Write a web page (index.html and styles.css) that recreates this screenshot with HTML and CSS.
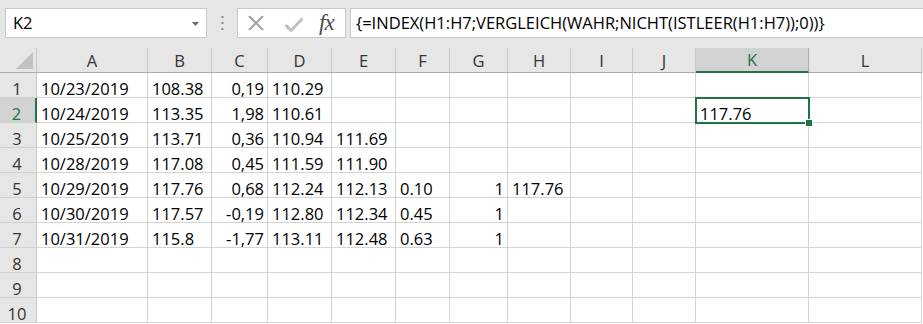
FILE: index.html
```html
<!DOCTYPE html>
<html>
<head>
<meta charset="utf-8">
<link rel="stylesheet" href="styles.css">
</head>
<body>
<div class="app">
  <div class="toolbar">
    <div class="namebox">
      <span class="name">K2</span>
      <svg class="dd" width="7" height="4" viewBox="0 0 7 4"><polygon points="0,0 7,0 3.5,4" fill="#6a6a6a"/></svg>
    </div>
    <div class="grip">
      <svg width="3" height="14" viewBox="0 0 3 14"><rect x="0.5" y="0" width="2" height="2" fill="#8a8a8a"/><rect x="0.5" y="6" width="2" height="2" fill="#8a8a8a"/><rect x="0.5" y="12" width="2" height="2" fill="#8a8a8a"/></svg>
    </div>
    <div class="fbtns">
      <svg class="ico" width="18" height="16" viewBox="0 0 18 16"><path d="M2 1 L16 15 M16 1 L2 15" stroke="#a3a3a3" stroke-width="2" fill="none"/></svg>
      <svg class="ico" width="20" height="15" viewBox="0 0 20 15"><path d="M1.5 8 L7 13.5 L18.5 1.5" stroke="#c0c0c0" stroke-width="3" fill="none"/></svg>
      <span class="fx">fx</span>
    </div>
    <div class="formula">{=INDEX(H1:H7;VERGLEICH(WAHR;NICHT(ISTLEER(H1:H7));0))}</div>
  </div>
  <div class="sheet">
    <div class="row head">
      <div class="corner"><svg width="17" height="17" viewBox="0 0 17 17"><polygon points="17,0 17,17 0,17" fill="#c2c2c2"/></svg></div>
      <div class="ch">A</div><div class="ch">B</div><div class="ch">C</div><div class="ch">D</div><div class="ch">E</div><div class="ch">F</div><div class="ch">G</div><div class="ch">H</div><div class="ch">I</div><div class="ch">J</div><div class="ch sel">K</div><div class="ch">L</div>
    </div>
    <div class="row">
      <div class="rh">1</div>
      <div class="c">10/23/2019</div><div class="c">108.38</div><div class="c r">0,19</div><div class="c">110.29</div><div class="c"></div><div class="c"></div><div class="c"></div><div class="c"></div><div class="c"></div><div class="c"></div><div class="c"></div><div class="c"></div>
    </div>
    <div class="row">
      <div class="rh sel">2</div>
      <div class="c">10/24/2019</div><div class="c">113.35</div><div class="c r">1,98</div><div class="c">110.61</div><div class="c"></div><div class="c"></div><div class="c"></div><div class="c"></div><div class="c"></div><div class="c"></div><div class="c active">117.76<span class="handle"></span></div><div class="c"></div>
    </div>
    <div class="row">
      <div class="rh">3</div>
      <div class="c">10/25/2019</div><div class="c">113.71</div><div class="c r">0,36</div><div class="c">110.94</div><div class="c">111.69</div><div class="c"></div><div class="c"></div><div class="c"></div><div class="c"></div><div class="c"></div><div class="c"></div><div class="c"></div>
    </div>
    <div class="row">
      <div class="rh">4</div>
      <div class="c">10/28/2019</div><div class="c">117.08</div><div class="c r">0,45</div><div class="c">111.59</div><div class="c">111.90</div><div class="c"></div><div class="c"></div><div class="c"></div><div class="c"></div><div class="c"></div><div class="c"></div><div class="c"></div>
    </div>
    <div class="row">
      <div class="rh">5</div>
      <div class="c">10/29/2019</div><div class="c">117.76</div><div class="c r">0,68</div><div class="c">112.24</div><div class="c">112.13</div><div class="c">0.10</div><div class="c r">1</div><div class="c">117.76</div><div class="c"></div><div class="c"></div><div class="c"></div><div class="c"></div>
    </div>
    <div class="row">
      <div class="rh">6</div>
      <div class="c">10/30/2019</div><div class="c">117.57</div><div class="c r">-0,19</div><div class="c">112.80</div><div class="c">112.34</div><div class="c">0.45</div><div class="c r">1</div><div class="c"></div><div class="c"></div><div class="c"></div><div class="c"></div><div class="c"></div>
    </div>
    <div class="row">
      <div class="rh">7</div>
      <div class="c">10/31/2019</div><div class="c">115.8</div><div class="c r">-1,77</div><div class="c">113.11</div><div class="c">112.48</div><div class="c">0.63</div><div class="c r">1</div><div class="c"></div><div class="c"></div><div class="c"></div><div class="c"></div><div class="c"></div>
    </div>
    <div class="row">
      <div class="rh">8</div>
      <div class="c"></div><div class="c"></div><div class="c"></div><div class="c"></div><div class="c"></div><div class="c"></div><div class="c"></div><div class="c"></div><div class="c"></div><div class="c"></div><div class="c"></div><div class="c"></div>
    </div>
    <div class="row">
      <div class="rh">9</div>
      <div class="c"></div><div class="c"></div><div class="c"></div><div class="c"></div><div class="c"></div><div class="c"></div><div class="c"></div><div class="c"></div><div class="c"></div><div class="c"></div><div class="c"></div><div class="c"></div>
    </div>
    <div class="row">
      <div class="rh">10</div>
      <div class="c"></div><div class="c"></div><div class="c"></div><div class="c"></div><div class="c"></div><div class="c"></div><div class="c"></div><div class="c"></div><div class="c"></div><div class="c"></div><div class="c"></div><div class="c"></div>
    </div>
  </div>
</div>
</body>
</html>
```

FILE: styles.css
```css
* { box-sizing: border-box; }
html, body { margin: 0; padding: 0; background: #ffffff; }
body {
  width: 923px;
  height: 324px;
  overflow: hidden;
  font-family: "Open Sans", "Noto Sans", sans-serif;
  font-size: 16.5px;
  color: #000;
}
.app { display: flex; flex-direction: column; }

.toolbar {
  height: 48px;
  background: #e6e6e6;
  display: flex;
  align-items: flex-start;
  padding: 8px 0 0 5px;
}
.namebox {
  width: 202px;
  height: 30px;
  background: #fff;
  border: 1px solid #c8c8c8;
  display: flex;
  align-items: center;
  justify-content: space-between;
  padding: 0 7px 0 7px;
}
.name { line-height: 20px; }
.dd { margin-top: 1px; }
.grip {
  width: 30px;
  height: 30px;
  display: flex;
  align-items: center;
  justify-content: center;
}
.fbtns {
  width: 109px;
  height: 30px;
  background: #fff;
  border: 1px solid #c8c8c8;
  display: flex;
  align-items: center;
  padding-left: 9px;
}
.fbtns .ico:first-child { margin-right: 19px; }
.fbtns .ico:nth-child(2) { margin-right: 15px; margin-top: 2px; }
.fx {
  font-family: "Liberation Serif", "DejaVu Serif", serif;
  font-style: italic;
  font-size: 23px;
  color: #4a4a4a;
  line-height: 28px;
  letter-spacing: -1px;
}
.formula {
  margin-left: 4px;
  flex: 1;
  height: 30px;
  background: #fff;
  border: 1px solid #c8c8c8;
  border-right: none;
  padding: 0 0 0 5px;
  line-height: 28px;
  white-space: nowrap;
  overflow: hidden;
}

.sheet { display: flex; flex-direction: column; }
.row {
  display: grid;
  grid-template-columns: 37px 111px 64px 56px 64px 64px 54px 58px 63px 62px 63px 113px 113px;
  height: 25px;
}
.head { background: #e6e6e6; }
.corner {
  border-right: 1px solid #c6c6c6;
  border-bottom: 1px solid #ababab;
  display: flex;
  align-items: flex-end;
  justify-content: flex-end;
  padding: 0 3px 3px 0;
}
.ch {
  border-right: 1px solid #cacaca;
  border-bottom: 1px solid #ababab;
  display: flex;
  align-items: center;
  justify-content: center;
  color: #333;
  line-height: 20px;
  padding-top: 1px;
}
.ch.sel {
  background: #d2d2d2;
  color: #217346;
  border-bottom: 2px solid #217346;
  border-right-color: #ababab;
}
.rh {
  background: #e6e6e6;
  border-right: 1px solid #c6c6c6;
  border-bottom: 1px solid #d0d0d0;
  display: flex;
  align-items: flex-end;
  justify-content: center;
  color: #333;
  line-height: 16px;
  padding-right: 2px;
}
.rh.sel {
  background: #d2d2d2;
  color: #217346;
  border-right: 2px solid #217346;
}
.c {
  border-right: 1px solid #d4d4d4;
  border-bottom: 1px solid #d4d4d4;
  display: flex;
  align-items: flex-end;
  padding: 0 4px 0 4px;
  line-height: 16px;
  white-space: nowrap;
  color: #000;
  position: relative;
}
.c.r { justify-content: flex-end; padding-right: 3px; }
.c.active {
  outline: 2px solid #217346;
  outline-offset: -1px;
  z-index: 1;
}
.handle {
  position: absolute;
  right: -4px;
  bottom: -4px;
  width: 6px;
  height: 6px;
  background: #217346;
  outline: 1px solid #fff;
}
```
